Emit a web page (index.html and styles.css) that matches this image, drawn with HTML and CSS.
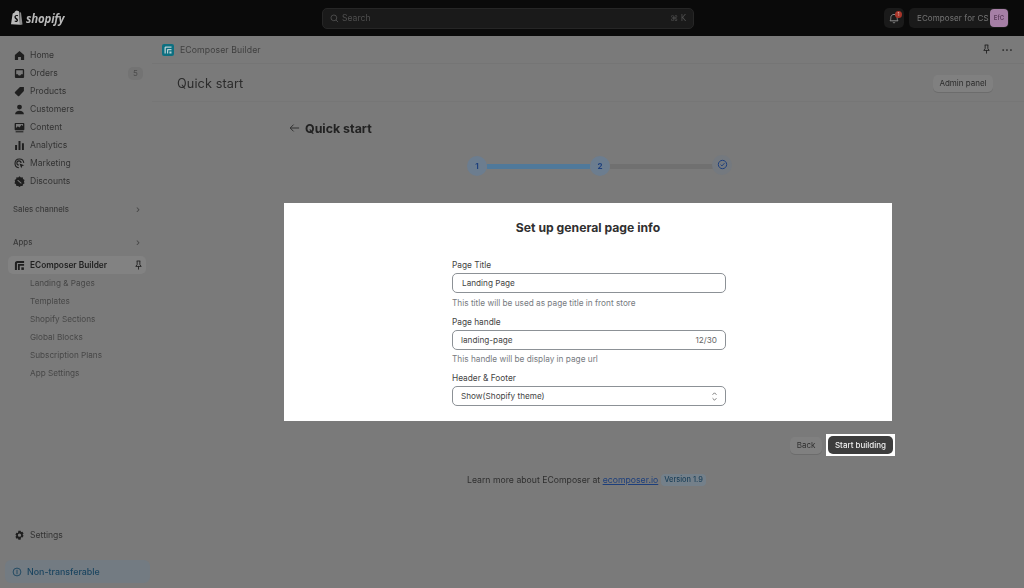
FILE: index.html
```html
<!DOCTYPE html>
<html lang="en">
<head>
<meta charset="utf-8">
<title>Quick start</title>
<link rel="stylesheet" href="styles.css">
</head>
<body>
<header class="topbar">
  <div class="brand">
    <svg class="brand-bag" viewBox="0 0 14 16"><path d="M1 14.2 2.6 3.9c.1-.4 1-.7 1.600-.9C4.700 1.500 5.700.5 6.900.5c.6 0 1 .3 1.300.8l.8-.2L10 14.800Z" fill="#b9b9b9"/><path d="M9.500 2.200 11 2.500l1.500 12.100-2.500.4Z" fill="#8c8c8c"/><path d="M7.700 6.300c-.4-.2-2-.5-2 .7 0 1 2.300 1.300 2.300 3.200 0 1.600-1.900 2.300-3.400 1.400l.3-1.100c.6.400 1.700.7 1.700-.1 0-1-2.200-1.200-2.200-3.300 0-1.700 1.900-2.600 3.700-2Z" fill="#0a0a0a"/></svg>
    <span class="brand-name">shopify</span>
  </div>
  <div class="search">
    <svg class="search-icon" viewBox="0 0 10 10"><circle cx="4.300" cy="4.300" r="3.200"/><path d="m6.700 6.700 2.300 2.300"/></svg>
    <span class="search-label">Search</span>
    <span class="search-key">⌘ K</span>
  </div>
  <div class="bell">
    <svg viewBox="0 0 12 12"><path d="M2 8.800c.8-.9.800-1.800.8-3.200C2.800 3.700 4.200 2.400 6 2.400s3.200 1.300 3.200 3.200c0 1.400 0 2.300.8 3.200Z"/><path d="M4.800 10.300c.6.600 1.800.6 2.400 0"/></svg>
    <span class="bell-dot">1</span>
  </div>
  <div class="store">
    <span class="store-name">EComposer for CS</span>
    <span class="store-avatar">EfC</span>
  </div>
</header>

<div class="shell">
  <nav class="sidebar">
    <ul class="nav-list">
      <li class="nav-item"><svg class="nav-icon" viewBox="0 0 10 10"><path d="M5 .8.800 4.600V9.200h2.900V6.400h2.600v2.800h2.900V4.600Z"/></svg>Home</li>
      <li class="nav-item"><svg class="nav-icon" viewBox="0 0 10 10"><path fill-rule="evenodd" d="M2 .8h6c.7 0 1.200.5 1.200 1.200v6c0 .7-.5 1.200-1.200 1.200H2C1.300 9.200.8 8.700.8 8V2C.8 1.300 1.300.8 2 .8Zm0 1.200v3.600h1.500c.2.800.8 1.200 1.500 1.200s1.300-.4 1.500-1.200H8V2Z"/></svg>Orders<span class="nav-badge">5</span></li>
      <li class="nav-item"><svg class="nav-icon" viewBox="0 0 10 10"><path d="M5.400 1H9v3.600L4.700 9.200c-.3.300-.8.300-1.100 0L.9 6.500c-.3-.3-.3-.8 0-1.100Z"/></svg>Products</li>
      <li class="nav-item"><svg class="nav-icon" viewBox="0 0 10 10"><circle cx="5" cy="2.800" r="2.200"/><path d="M1 9.400c0-2.200 1.700-3.300 4-3.300s4 1.100 4 3.300Z"/></svg>Customers</li>
      <li class="nav-item"><svg class="nav-icon" viewBox="0 0 10 10"><path fill-rule="evenodd" d="M1.500.8h7c.5 0 .9.400.9.900v4.800c0 .5-.4.900-.9.900h-7c-.5 0-.9-.4-.9-.9V1.700c0-.5.400-.9.900-.9Zm.3 1.100v3.500l1.700-1.500 1.400 1.200L7 2.600l1.200 1.300V1.900Z"/><path d="M1.500 8.400h7v1h-7z"/></svg>Content</li>
      <li class="nav-item"><svg class="nav-icon" viewBox="0 0 10 10"><path d="M1 4.500h1.800v4.700H1zM4.100 1h1.800v8.200H4.100zM7.200 3h1.800v6.200H7.200z"/></svg>Analytics</li>
      <li class="nav-item"><svg class="nav-icon nav-icon-line" viewBox="0 0 10 10"><path d="M4.400 8.900a4 4 0 1 1 4.500-4.500"/><path d="M4.500 6.400a1.900 1.900 0 1 1 1.900-1.900"/><path class="fill-solid" d="m5 5 4.300 1.500-1.800.8-.9 2Z"/></svg>Marketing</li>
      <li class="nav-item"><svg class="nav-icon" viewBox="0 0 10 10"><path fill-rule="evenodd" d="m5 .3 1.300 1 1.600-.1.300 1.600 1.400.9L9 5.200l.6 1.500-1.400.8-.4 1.600-1.600-.1L5 9.900 3.800 9l-1.600.1-.4-1.600L.4 6.700 1 5.200.6 3.700 2 2.800l.2-1.600 1.600.1ZM3.600 3.400l-.6.600 3.400 3 .6-.6Z"/></svg>Discounts</li>
    </ul>

    <div class="nav-heading nav-heading-sales">Sales channels<span class="chevron">›</span></div>
    <div class="nav-heading nav-heading-apps">Apps<span class="chevron">›</span></div>

    <div class="nav-app">
      <svg class="nav-icon" viewBox="0 0 12 12"><path d="M1 3.500C1 2 2 1 3.500 1H11v2.200H4C3.500 3.200 3.200 3.500 3.200 4v7H1Z"/><path d="M4.300 4.300H11v2H6.300v4.700h-2Z"/><path d="M8 8h2.800v2.800H8Z"/></svg>
      <span class="nav-app-name">EComposer Builder</span>
      <svg class="pin" viewBox="0 0 10 12"><path d="M3 1h4M3.500 1v4L2 7h6L6.500 5V1M5 7v3.500"/></svg>
    </div>
    <ul class="sub-list">
      <li>Landing &amp; Pages</li>
      <li>Templates</li>
      <li>Shopify Sections</li>
      <li>Global Blocks</li>
      <li>Subscription Plans</li>
      <li>App Settings</li>
    </ul>

    <div class="sidebar-end">
      <div class="nav-item"><svg class="nav-icon" viewBox="0 0 10 10"><path fill-rule="evenodd" d="m4 .6h2l.4 1.200 1.300-.3 1 1.700-.9 1 .9 1-1 1.700-1.300-.3L6 8.800H4l-.4-1.200-1.300.3-1-1.700.9-1-.9-1 1-1.700 1.300.3ZM5 3.200a1.500 1.500 0 1 0 0 3 1.500 1.500 0 0 0 0-3Z"/></svg>Settings</div>
      <div class="plan">
        <svg viewBox="0 0 10 10"><circle cx="5" cy="5" r="3.900"/><path d="M5 2.800v4.400"/></svg>
        Non-transferable
      </div>
    </div>
  </nav>

  <main class="content">
    <div class="app-bar">
      <svg class="app-logo" viewBox="0 0 12 12"><rect width="12" height="12" rx="2" fill="#0d6f80"/><path d="M2.500 9.500V4C2.500 3 3 2.500 4 2.500h5.500v1.300H4.500c-.5 0-.7.200-.7.700v5Z" fill="#b8cfd3"/><path d="M5 9.500V6c0-.6.400-1 1-1h3.500v1.200H6.200v3.300Z" fill="#b8cfd3"/><rect x="7.400" y="7.500" width="2.100" height="2" fill="#b8cfd3"/></svg>
      <span class="app-bar-name">EComposer Builder</span>
      <svg class="pin app-pin" viewBox="0 0 10 12"><path d="M3 1h4M3.500 1v4L2 7h6L6.500 5V1M5 7v3.500"/></svg>
      <span class="dots">•••</span>
    </div>
    <div class="page-head">
      <h2 class="page-title">Quick start</h2>
      <button class="admin-btn">Admin panel</button>
    </div>

    <div class="wizard">
      <div class="wizard-head">
        <svg viewBox="0 0 12 10"><path d="M11 5H1.500M5 1.300 1.300 5 5 8.700"/></svg>
        <h1>Quick start</h1>
      </div>
      <div class="stepper">
        <span class="step">1</span>
        <span class="step-line step-line-done"></span>
        <span class="step">2</span>
        <span class="step-line"></span>
        <span class="step step-end"><svg viewBox="0 0 10 10"><circle cx="5" cy="5" r="3.800"/><path d="m3.300 5.100 1.200 1.200 2.300-2.500"/></svg></span>
      </div>
      <section class="card">
        <h3>Set up general page info</h3>
        <form class="form">
          <label>Page Title</label>
          <div class="field field-title">Landing Page</div>
          <p class="help">This title will be used as page title in front store</p>
          <label>Page handle</label>
          <div class="field">landing-page<span class="count">12/30</span></div>
          <p class="help">This handle will be display in page url</p>
          <label>Header &amp; Footer</label>
          <div class="field">Show(Shopify theme)
            <svg class="updown" viewBox="0 0 8 12"><path d="m1.800 4 2.200-2.200L6.200 4M1.800 8 4 10.200 6.200 8"/></svg>
          </div>
        </form>
      </section>
      <div class="actions">
        <button class="back-btn">Back</button>
        <span class="primary-ring"><button class="primary-btn">Start building</button></span>
      </div>
      <p class="learn">Learn more about EComposer at <a href="#">ecomposer.io</a><span class="version">Version 1.9</span></p>
    </div>
  </main>
</div>
</body>
</html>
```

FILE: styles.css
```css
* { box-sizing: border-box; }
html, body { margin: 0; padding: 0; }
body {
  width: 1024px;
  height: 588px;
  overflow: hidden;
  display: flex;
  flex-direction: column;
  background: #7a7a7a;
  color: #2b2b2b;
  font-family: Inter, "Liberation Sans", sans-serif;
  font-size: 9px;
}
ul { list-style: none; margin: 0; padding: 0; }
h1, h2, h3, p { margin: 0; }
button { font-family: inherit; border: 0; padding: 0; }

/* the reference is a downscaled capture, so everything is slightly soft */
.topbar, .shell { filter: blur(0.35px); }

/* top bar */
.topbar {
  flex: 0 0 36px;
  display: flex;
  align-items: center;
  background: #0a0a0a;
}
.brand { flex: 0 0 322px; display: flex; align-items: center; padding-left: 10px; }
.brand-bag { width: 14px; height: 16px; }
.brand-name {
  margin-left: 2px;
  color: #b9b9b9;
  font: italic 700 11.500px "Open Sans", sans-serif;
  letter-spacing: -0.2px;
}
.search {
  flex: 0 0 372px;
  height: 21px;
  display: flex;
  align-items: center;
  padding: 0 7px;
  background: #1a1a1a;
  border: 1px solid #262626;
  border-radius: 5px;
  color: #4f4f4f;
  font-size: 8.600px;
}
.search-icon { width: 9px; height: 9px; fill: none; stroke: #4f4f4f; stroke-width: 1; }
.search-label { margin-left: 3px; }
.search-key { margin-left: auto; font-family: "DejaVu Sans", sans-serif; font-size: 8px; }
.bell {
  position: relative;
  margin-left: 190px;
  width: 20px;
  height: 20px;
  background: #1a1a1a;
  border-radius: 5px;
  display: flex;
  align-items: center;
  justify-content: center;
}
.bell svg { width: 12px; height: 12px; fill: none; stroke: #8a8a8a; stroke-width: 1; }
.bell-dot {
  position: absolute;
  top: 3px;
  right: 2px;
  width: 7px;
  height: 7px;
  border-radius: 50%;
  background: #a8352a;
  color: #d8b5b0;
  font-size: 5px;
  line-height: 7px;
  text-align: center;
}
.store {
  margin-left: 5px;
  width: 100px;
  height: 20px;
  display: flex;
  align-items: center;
  justify-content: space-between;
  padding: 0 1px 0 8px;
  background: #1a1a1a;
  border-radius: 5px;
  color: #777;
  font-size: 8px;
  letter-spacing: 0.1px;
  white-space: nowrap;
}
.store-avatar {
  width: 18px;
  height: 18px;
  border-radius: 4px;
  background: #a67fa6;
  color: #5b3b5b;
  font-size: 6px;
  line-height: 18px;
  text-align: center;
  font-weight: 600;
}

/* shell */
.shell { flex: 1; display: flex; min-height: 0; }
.sidebar {
  flex: 0 0 152px;
  display: flex;
  flex-direction: column;
  padding: 10px 0 5px;
  font-size: 8.600px;
}
.nav-item {
  height: 18px;
  display: flex;
  align-items: center;
  padding-left: 14px;
  color: #333;
}
.nav-icon { width: 11px; height: 11px; margin-right: 5px; fill: #1f1f1f; flex: none; }
.nav-icon-line path { fill: none; stroke: #1f1f1f; stroke-width: 1; }
.nav-icon-line .fill-solid { fill: #1f1f1f; stroke: none; }
.nav-badge {
  margin-left: auto;
  margin-right: 9px;
  width: 15px;
  height: 13px;
  border-radius: 5px;
  background: #737373;
  color: #4b4b4b;
  font-size: 8px;
  line-height: 13px;
  text-align: center;
}
.nav-heading {
  display: flex;
  justify-content: space-between;
  padding: 0 12px 0 13px;
  height: 12px;
  line-height: 12px;
  color: #3a3a3a;
  font-size: 7.800px;
  font-weight: 500;
}
.nav-heading-sales { margin-top: 13px; }
.nav-heading-apps { margin-top: 21px; }
.chevron { color: #4b4b4b; font-size: 10px; }
.nav-app {
  height: 18px;
  margin: 8px 6px 0 8px;
  padding-left: 6px;
  display: flex;
  align-items: center;
  border-radius: 5px;
  background: #828282;
}
.nav-app-name { font-size: 8.300px; font-weight: 600; color: #1f1f1f; }
.pin { width: 9px; height: 11px; fill: none; stroke: #1f1f1f; stroke-width: 1; }
.nav-app .pin { margin-left: auto; margin-right: 3px; }
.sub-list li {
  height: 18px;
  line-height: 18px;
  padding-left: 30px;
  color: #474747;
  font-size: 8.200px;
}
.sidebar-end { margin-top: auto; }
.plan {
  margin: 16px 2px 0 5px;
  height: 23px;
  display: flex;
  align-items: center;
  padding-left: 7px;
  border-radius: 6px;
  background: #737b82;
  color: #1b4560;
  font-size: 8.900px;
  font-weight: 500;
}
.plan svg { width: 10px; height: 10px; margin-right: 5px; fill: none; stroke: #1b4560; stroke-width: .9; }

/* content */
.content { flex: 1; min-width: 0; display: flex; flex-direction: column; }
.app-bar {
  flex: 0 0 28px;
  display: flex;
  align-items: center;
  padding: 0 11px 0 10px;
  color: #3f3f3f;
  font-size: 8.700px;
  border-bottom: 1px solid #757575;
}
.app-logo { width: 12px; height: 12px; margin-right: 6px; }
.app-bar-name { letter-spacing: 0.1px; }
.app-pin { margin-left: auto; }
.dots { margin-left: 10px; font-size: 6px; letter-spacing: 0.5px; color: #2b2b2b; }
.page-head {
  flex: 0 0 38px;
  display: flex;
  align-items: center;
  justify-content: space-between;
  padding: 1px 31px 0 25px;
  border-bottom: 1px solid #767676;
}
.page-title { font-size: 12.700px; font-weight: 400; color: #2b2b2b; letter-spacing: 0.1px; }
.admin-btn {
  width: 60px;
  height: 17px;
  border-radius: 5px;
  background: #808080;
  box-shadow: 0 1px 0 #6c6c6c;
  color: #2b2b2b;
  font-size: 8px;
}
.wizard { width: 608px; margin-left: 132px; display: flex; flex-direction: column; }
.wizard-head { display: flex; align-items: center; margin-top: 16px; height: 20px; padding-left: 5px; }
.wizard-head svg { width: 11px; height: 10px; fill: none; stroke: #2b2b2b; stroke-width: 1; }
.wizard-head h1 { margin-left: 5px; font-size: 12.400px; font-weight: 700; color: #222; }
.stepper { display: flex; align-items: center; margin: 18px 0 0 183px; height: 20px; }
.step {
  flex: none;
  width: 20px;
  height: 20px;
  border-radius: 50%;
  background: #6c7d8f;
  color: #1d3f7c;
  font-size: 8px;
  font-weight: 700;
  line-height: 20px;
  text-align: center;
}
.step-end { display: flex; align-items: center; justify-content: center; margin-left: -1px; margin-top: -3px; background: #74797f; }
.step-end svg { width: 11px; height: 11px; fill: none; stroke: #1d3f7c; stroke-width: .9; }
.step-line { width: 103px; height: 5px; background: #707070; }
.step-line-done { background: #50799a; }
.card {
  height: 218px;
  margin-top: 27px;
  padding-top: 18px;
  background: #fff;
  color: #303030;
}
.card h3 { font-size: 12.200px; font-weight: 700; line-height: 14px; text-align: center; color: #303030; }
.form { width: 274px; margin: 23px 0 0 168px; display: flex; flex-direction: column; }
.form label { height: 12px; line-height: 12px; padding-top: 1px; font-size: 8.300px; color: #444; }
.field {
  height: 20px;
  margin-top: 3px;
  display: flex;
  align-items: center;
  justify-content: space-between;
  padding: 0 8px;
  border: 1px solid #8c9196;
  border-radius: 5px;
  font-size: 8.200px;
  color: #444;
}
.field-title { padding-left: 9px; }
.count { color: #666; }
.help { height: 12px; line-height: 12px; margin: 3.500px 0 6px; font-size: 8.250px; color: #777b7f; }
.updown { width: 7px; height: 11px; margin-right: -1px; fill: none; stroke: #555; stroke-width: .9; }
.actions { display: flex; justify-content: flex-end; align-items: center; gap: 4px; margin-top: 13px; margin-right: -3px; }
.back-btn {
  width: 32px;
  height: 17px;
  border-radius: 5px;
  background: #808080;
  box-shadow: 0 1px 0 #6c6c6c;
  color: #2f2f2f;
  font-size: 8px;
}
.primary-ring { display: block; background: #fff; padding: 2px; height: 22px; }
.primary-btn {
  display: block;
  width: 65px;
  height: 18px;
  border-radius: 5px;
  background: #3d3d3d;
  color: #f0f0f0;
  font-size: 8px;
  font-weight: 500;
}
.learn { margin: 17px 0 0 183px; height: 13px; display: flex; align-items: center; font-size: 8.700px; color: #2f2f2f; white-space: pre; }
.learn a { color: #1d3f7c; }
.version {
  margin-left: 3px;
  padding: 0 3px;
  height: 12px;
  line-height: 12px;
  border-radius: 4px;
  background: #74808a;
  color: #1b3f58;
  font-size: 7.400px;
  font-weight: 500;
}
```
